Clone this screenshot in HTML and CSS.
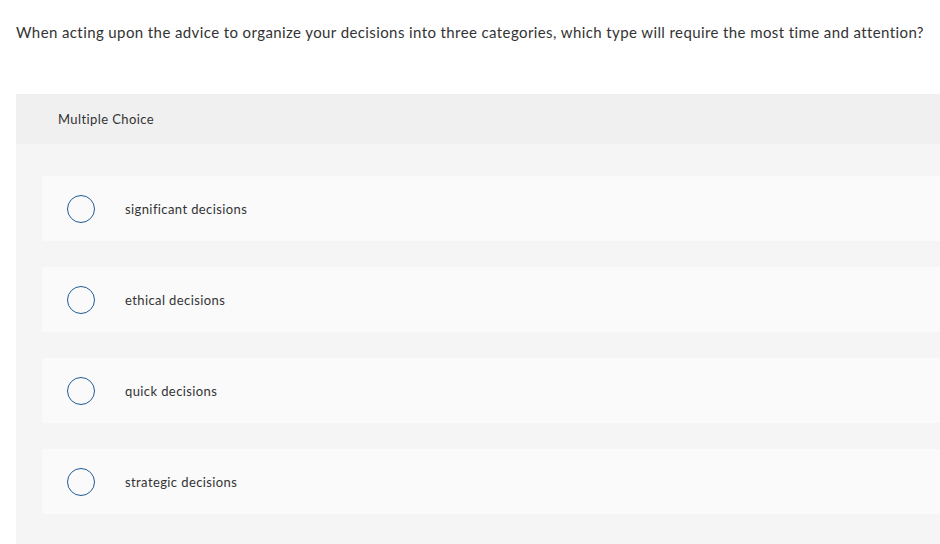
FILE: index.html
```html
<!DOCTYPE html>
<html>
<head>
<meta charset="utf-8">
<link rel="stylesheet" href="styles.css">
</head>
<body>
<p class="question">When acting upon the advice to organize your decisions into three categories, which type will require the most time and attention?</p>
<div class="panel">
  <div class="panel-head">Multiple Choice</div>
  <div class="panel-body">
    <div class="option"><span class="radio"></span><span class="label">significant decisions</span></div>
    <div class="option"><span class="radio"></span><span class="label">ethical decisions</span></div>
    <div class="option"><span class="radio"></span><span class="label">quick decisions</span></div>
    <div class="option"><span class="radio"></span><span class="label">strategic decisions</span></div>
  </div>
</div>
</body>
</html>
```
FILE: styles.css
```css
html, body { margin: 0; padding: 0; overflow: hidden; background: #fff; }
body { font-family: Lato, "Open Sans", sans-serif; color: #333; letter-spacing: 0.4px; }
.question {
  margin: 0;
  padding: 22px 0 0 16px;
  font-size: 15px;
  line-height: 20px;
  white-space: nowrap;
}
.panel {
  margin: 52px -40px 0 16px;
}
.panel-head {
  background: #f0f0f0;
  height: 50px;
  padding-left: 42px;
  display: flex;
  align-items: center;
  font-size: 13px;
}
.panel-body {
  background: #f5f5f5;
  padding: 32px 0 30px 26px;
  display: flex;
  flex-direction: column;
  gap: 26px;
}
.option {
  background: #fafafa;
  border-radius: 3px;
  height: 65px;
  display: flex;
  align-items: center;
  padding-left: 25px;
}
.radio {
  width: 26px;
  height: 26px;
  border: 1.3px solid #1f5b94;
  border-radius: 50%;
  box-sizing: content-box;
  flex: none;
}
.label {
  margin-left: 30px;
  font-size: 13px;
}
```
